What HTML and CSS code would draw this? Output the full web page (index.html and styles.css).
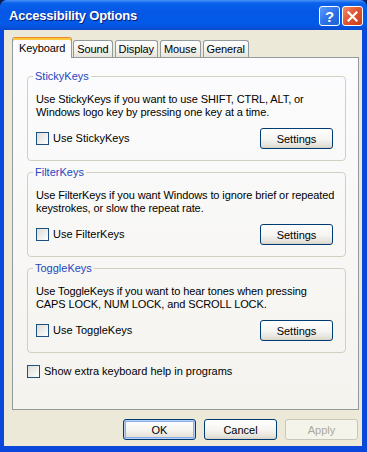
FILE: index.html
```html
<!DOCTYPE html>
<html lang="en">
<head>
    <meta charset="UTF-8">
    <meta name="viewport" content="width=device-width, initial-scale=1.0">
    <title>Accessibility Options</title>
    <link rel="stylesheet" href="styles.css">
</head>
<body>

    <div class="window">
        <!-- Title bar -->
        <div class="titlebar">
            <span class="title">Accessibility Options</span>
            <div class="caption-buttons">
                <button class="cap-btn help">?</button>
                <button class="cap-btn close">
                    <svg width="11" height="11" viewBox="0 0 11 11">
                        <path d="M1.5 1.5 L9.5 9.5 M9.5 1.5 L1.5 9.5" stroke="#fff" stroke-width="2.2" stroke-linecap="square"/>
                    </svg>
                </button>
            </div>
        </div>

        <!-- Dialog body -->
        <div class="client">
            <div class="tabs">
                <div class="tab active">Keyboard</div>
                <div class="tab">Sound</div>
                <div class="tab">Display</div>
                <div class="tab">Mouse</div>
                <div class="tab">General</div>
            </div>

            <div class="panel">
                <fieldset class="group">
                    <legend>StickyKeys</legend>
                    <p>Use StickyKeys if you want to use SHIFT, CTRL, ALT, or<br>Windows logo key by pressing one key at a time.</p>
                    <div class="row">
                        <label class="check"><span class="box"></span>Use StickyKeys</label>
                        <button class="btn">Settings</button>
                    </div>
                </fieldset>

                <fieldset class="group">
                    <legend>FilterKeys</legend>
                    <p>Use FilterKeys if you want Windows to ignore brief or repeated<br>keystrokes, or slow the repeat rate.</p>
                    <div class="row">
                        <label class="check"><span class="box"></span>Use FilterKeys</label>
                        <button class="btn">Settings</button>
                    </div>
                </fieldset>

                <fieldset class="group">
                    <legend>ToggleKeys</legend>
                    <p>Use ToggleKeys if you want to hear tones when pressing<br>CAPS LOCK, NUM LOCK, and SCROLL LOCK.</p>
                    <div class="row">
                        <label class="check"><span class="box"></span>Use ToggleKeys</label>
                        <button class="btn">Settings</button>
                    </div>
                </fieldset>

                <label class="check extra"><span class="box"></span>Show extra keyboard help in programs</label>
            </div>

            <div class="actions">
                <button class="btn default">OK</button>
                <button class="btn">Cancel</button>
                <button class="btn disabled">Apply</button>
            </div>
        </div>
    </div>

</body>
</html>
```

FILE: styles.css
```css
* {
    margin: 0;
    padding: 0;
    box-sizing: border-box;
}

/* Page */
html, body {
    width: 367px;
    height: 452px;
    background-color: #0b1d52;
    overflow: hidden;
}

body {
    font-family: "Liberation Sans", Arial, sans-serif;
    font-size: 11px;
    line-height: 13px;
    color: #000;
}

/* Window frame */
.window {
    width: 367px;
    height: 452px;
    display: flex;
    flex-direction: column;
    background-color: #0a48dc;
    border-radius: 7px 7px 0 0;
    padding: 0 5px 6px 4px;
}

/* Title bar */
.titlebar {
    height: 30px;
    margin: 0 -5px 0 -4px;
    display: flex;
    align-items: center;
    justify-content: space-between;
    padding: 1px 4px 0 9px;
    border-radius: 7px 7px 0 0;
    background: linear-gradient(#4a93f8 0, #0a62ea 3px, #0557e6 40%, #035ae8 80%, #0a4ad0 100%);
}

.title {
    color: #fff;
    font-weight: bold;
    font-size: 13px;
    letter-spacing: -0.2px;
    text-shadow: 1px 1px 0 #0a1f73;
}

.caption-buttons {
    display: flex;
    gap: 2px;
    margin-top: 1px;
}

.cap-btn {
    width: 21px;
    height: 20px;
    border: 1px solid #fff;
    border-radius: 3px;
    display: flex;
    align-items: center;
    justify-content: center;
    color: #fff;
    font-family: "Liberation Sans", Arial, sans-serif;
    font-weight: bold;
    font-size: 15px;
}

.cap-btn.help {
    background: linear-gradient(135deg, #5c9cf8, #2a6fe6 55%, #1f5fd8);
}

.cap-btn.close {
    background: linear-gradient(135deg, #f08e6a, #e0532d 50%, #c83e1a);
}

/* Client area */
.client {
    flex: 1;
    display: flex;
    flex-direction: column;
    background-color: #ece9d8;
    padding: 7px 3px 6px 8px;
}

/* Tabs */
.tabs {
    height: 20px;
    display: flex;
    align-items: flex-end;
    gap: 2px;
    position: relative;
    z-index: 1;
}

.tab {
    height: 17px;
    padding: 2px 3px 0 3px;
    border: 1px solid #919b9c;
    border-bottom: none;
    border-radius: 3px 3px 0 0;
    background: linear-gradient(#ffffff, #f3f2ee 60%, #e6e4db);
    letter-spacing: -0.1px;
}

.tab.active {
    height: 21px;
    margin-bottom: -1px;
    margin-right: -1px;
    padding: 4px 6px 0 6px;
    border-top: 1px solid #e68b2c;
    background: #fcfcfe;
    box-shadow: inset 0 2px 0 #ffc83c;
}

/* Tab page */
.panel {
    height: 353px;
    border: 1px solid #919b9c;
    background: linear-gradient(#fcfcfe, #f4f3ee);
    padding: 12px 12px 0 14px;
}

/* Group boxes */
.group {
    min-width: 0;
    border: 1px solid #d0d0bf;
    border-radius: 4px;
    padding: 10px 12px 11px 8px;
    margin-bottom: 5px;
}

.group legend {
    color: #1f45c0;
    padding: 0 2px;
    margin-left: -3px;
}

.group p {
    margin-bottom: 9px;
    white-space: nowrap;
    letter-spacing: -0.1px;
}

.row {
    display: flex;
    align-items: center;
    justify-content: space-between;
}

/* Check boxes */
.check {
    display: flex;
    align-items: center;
    gap: 4px;
}

.box {
    width: 13px;
    height: 13px;
    border: 1px solid #1c5180;
    background: linear-gradient(135deg, #dcdcd7, #ffffff);
}

.check.extra {
    margin-top: 12px;
}

/* Push buttons */
.btn {
    width: 73px;
    height: 21px;
    font-family: "Liberation Sans", Arial, sans-serif;
    font-size: 11px;
    color: #000;
    border: 1px solid #003c74;
    border-radius: 3px;
    background: linear-gradient(#ffffff, #f5f4f0 55%, #e3e0d6 90%, #d6d0c5);
}

.btn.default {
    box-shadow: inset 0 0 0 1px #b8d0f4, inset 0 0 0 2px #8aaeea;
}

.btn.disabled {
    color: #aca899;
    border-color: #c9c7ba;
    background: #f5f4ea;
}

/* Bottom buttons */
.actions {
    margin-top: 9px;
    display: flex;
    justify-content: flex-end;
    gap: 8px;
    padding-right: 1px;
}
```
